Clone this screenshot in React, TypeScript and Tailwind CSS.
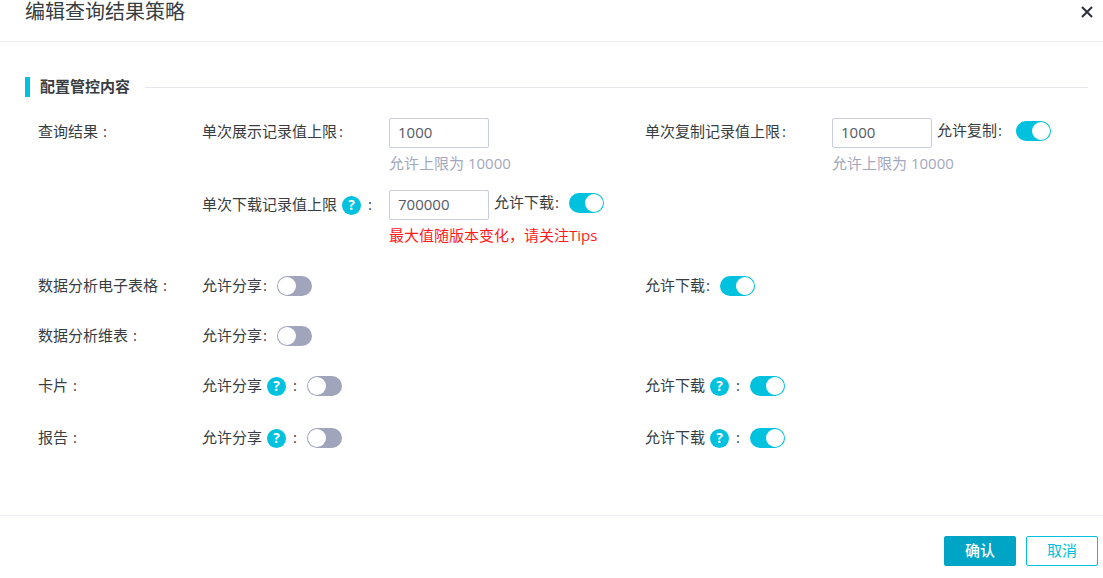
const font = { fontFamily: '"Open Sans", "Noto Sans CJK SC", sans-serif' };

function Help() {
  return (
    <span className="flex h-[19px] w-[19px] shrink-0 items-center justify-center rounded-full bg-[#00c1de] text-[14px] leading-none font-bold text-white">
      ?
    </span>
  );
}

function Toggle({ on }: { on: boolean }) {
  return (
    <span
      className={
        on
          ? "flex h-5 w-[35px] shrink-0 items-center justify-end rounded-full bg-[#00c1de] pr-px"
          : "flex h-5 w-[35px] shrink-0 items-center justify-start rounded-full bg-[#a0a5bc] pl-px"
      }
    >
      <span className="h-[18px] w-[18px] rounded-full bg-white" />
    </span>
  );
}

function Field({ value }: { value: string }) {
  return (
    <div className="flex h-[30px] w-[100px] shrink-0 items-center rounded-[2px] border border-[#c9cde0] bg-white pb-[2px] pl-2 text-[15px] text-[#555a66]">
      {value}
    </div>
  );
}

function Colon({ className }: { className: string }) {
  return <span className={className}>:</span>;
}

function HelpToggle({ label, on }: { label: string; on: boolean }) {
  return (
    <div className="flex h-5 items-center">
      <span className="w-[60px] shrink-0 pb-[2px]">{label}</span>
      <span className="ml-[5px]"><Help /></span>
      <Colon className="ml-[7px] w-[14px] pb-[2px]" />
      <Toggle on={on} />
    </div>
  );
}

function PlainToggle({ label, on, wide }: { label: string; on: boolean; wide?: boolean }) {
  return (
    <div className="flex h-5 items-center">
      <span className="w-[60px] shrink-0 pb-[2px]">{label}</span>
      <Colon className={wide ? "ml-[1px] w-[18px] pb-[2px]" : "ml-[1px] w-[14px] pb-[2px]"} />
      <Toggle on={on} />
    </div>
  );
}

function Row({ label, left, right, className }: { label: string; left: React.ReactNode; right?: React.ReactNode; className: string }) {
  return (
    <div className={`flex h-5 items-center ${className}`}>
      <div className="w-[164px] shrink-0 pb-[2px]">
        {label}
        <Colon className="ml-[5px]" />
      </div>
      <div className="w-[443px] shrink-0">{left}</div>
      <div>{right}</div>
    </div>
  );
}

export default function App() {
  return (
    <div style={font} className="flex h-[578px] w-[1103px] flex-col bg-white text-[15px] text-[#373d41]">
      <header className="flex h-[42px] shrink-0 items-start justify-between border-b border-[#eceef3] pr-[9px] pl-[25px]">
        <h1 className="text-[20px] leading-[24px] text-[#373d41]">编辑查询结果策略</h1>
        <svg className="mt-[5px]" width="14" height="14" viewBox="0 0 14 14" fill="none" stroke="#2b303b" strokeWidth="2">
          <path d="M2 2l10 10M12 2L2 12" />
        </svg>
      </header>

      <main className="flex-1 pr-[15px] pl-[25px]">
        <div className="mt-[35px] flex h-5 items-center">
          <span className="h-5 w-[5px] bg-[#00c1de]" />
          <h2 className="ml-[10px] pb-[2px] text-[15px] font-bold text-[#373d41]">配置管控内容</h2>
          <span className="ml-[15px] h-px flex-1 bg-[#e6e8f0]" />
        </div>

        <div className="pl-[13px]">
          <div className="mt-[21px] flex">
            <div className="w-[164px] shrink-0 pt-[3px] leading-5">
              查询结果<Colon className="ml-[5px]" />
            </div>
            <div className="w-[443px] shrink-0">
              <div className="flex">
                <div className="w-[187px] shrink-0 pt-[3px] leading-5">
                  单次展示记录值上限<Colon className="ml-[2px]" />
                </div>
                <div>
                  <Field value="1000" />
                  <div className="mt-[5px] leading-5 text-[#a3a8bd]">允许上限为 10000</div>
                </div>
              </div>
              <div className="mt-[17px] flex">
                <div className="flex h-[30px] w-[187px] shrink-0 items-center">
                  <span className="pb-[2px]">单次下载记录值上限</span>
                  <span className="ml-[5px]"><Help /></span>
                  <Colon className="ml-[7px] pb-[2px]" />
                </div>
                <div>
                  <div className="flex items-center">
                    <Field value="700000" />
                    <div className="-mt-[4px] ml-[5px]"><PlainToggle label="允许下载" on /></div>
                  </div>
                  <div className="mt-[5px] leading-5 text-[#ff1a1a]">最大值随版本变化，请关注Tips</div>
                </div>
              </div>
            </div>
            <div className="flex">
              <div className="w-[187px] shrink-0 pt-[3px] leading-5">
                单次复制记录值上限<Colon className="ml-[2px]" />
              </div>
              <div>
                <div className="flex items-center">
                  <Field value="1000" />
                  <div className="-mt-[4px] ml-[5px]"><PlainToggle label="允许复制" on wide /></div>
                </div>
                <div className="mt-[5px] leading-5 text-[#a3a8bd]">允许上限为 10000</div>
              </div>
            </div>
          </div>

          <Row className="mt-[31px]" label="数据分析电子表格" left={<PlainToggle label="允许分享" on={false} />} right={<PlainToggle label="允许下载" on />} />
          <Row className="mt-[30px]" label="数据分析维表" left={<PlainToggle label="允许分享" on={false} />} />
          <Row className="mt-[30px]" label="卡片" left={<HelpToggle label="允许分享" on={false} />} right={<HelpToggle label="允许下载" on />} />
          <Row className="mt-[32px]" label="报告" left={<HelpToggle label="允许分享" on={false} />} right={<HelpToggle label="允许下载" on />} />
        </div>
      </main>

      <footer className="flex h-[63px] shrink-0 items-start justify-end gap-[10px] border-t border-[#eceef3] pt-[20px] pr-[5px]">
        <button className="h-[30px] w-[72px] rounded-[2px] bg-[#00a4c4] pb-[2px] text-[15px] font-medium text-white">确认</button>
        <button className="h-[30px] w-[72px] rounded-[2px] border border-[#00c1de] bg-white pb-[2px] text-[15px] text-[#00c1de]">取消</button>
      </footer>
    </div>
  );
}
